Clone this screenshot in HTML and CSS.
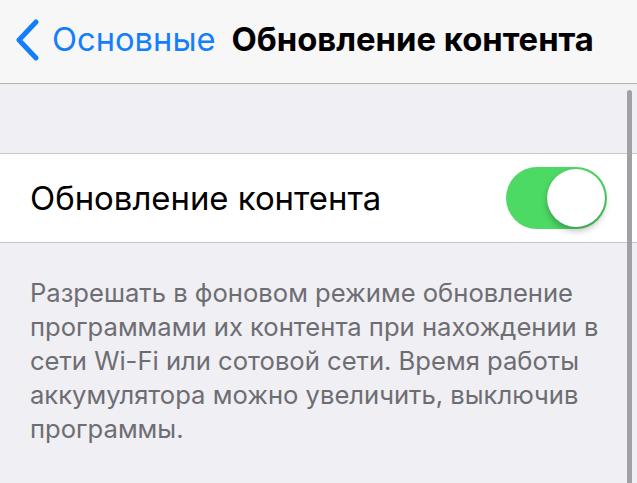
FILE: index.html
```html
<!DOCTYPE html>
<html lang="ru">
<head>
    <meta charset="UTF-8" />
    <title>Обновление контента</title>
    <link rel="stylesheet" href="styles.css">
</head>
<body>
    <div class="screen">
        <header class="navbar">
            <a class="back" href="#">
                <svg class="chevron" width="26" height="42" viewBox="0 0 26 42">
                    <path d="M22 3 L5 21 L22 39" fill="none" stroke="#157efb" stroke-width="5" stroke-linecap="round" stroke-linejoin="round"/>
                </svg>
                <span>Основные</span>
            </a>
            <h1 class="title">Обновление контента</h1>
        </header>

        <div class="spacer"></div>

        <div class="group">
            <div class="row">
                <span class="label">Обновление контента</span>
                <div class="switch on"><div class="knob"></div></div>
            </div>
        </div>

        <p class="footer">Разрешать в фоновом режиме обновление программами их контента при нахождении в сети Wi-Fi или сотовой сети. Время работы аккумулятора можно увеличить, выключив программы.</p>
    </div>
    <div class="scrollbar"></div>
</body>
</html>
```

FILE: styles.css
```css
body {
    margin: 0;
    background: #efeff4;
    font-family: Inter, 'Noto Sans', sans-serif;
    width: 637px;
    height: 483px;
    overflow: hidden;
    position: relative;
}

.navbar {
    height: 84px;
    background: #f7f7f7;
    border-bottom: 1px solid #b2b2b2;
    display: flex;
    align-items: center;
    padding: 0 0 5px 14px;
    box-sizing: border-box;
}

.back {
    display: flex;
    align-items: center;
    color: #157efb;
    text-decoration: none;
    font-size: 32.7px;
    gap: 12px;
}

.chevron {
    margin-top: 2px;
}

.title {
    margin: 0 0 0 16px;
    font-size: 32.8px;
    font-weight: 700;
    color: #000;
    white-space: nowrap;
}

.spacer {
    height: 69px;
}

.group {
    background: #fff;
    border-top: 1px solid #c8c7cc;
    border-bottom: 1px solid #c8c7cc;
}

.row {
    height: 88px;
    display: flex;
    align-items: center;
    justify-content: space-between;
    padding: 0 30px 0 30px;
}

.label {
    font-size: 32.9px;
    color: #000;
}

.switch {
    width: 101px;
    height: 62px;
    border-radius: 31px;
    background: #4cd964;
    display: flex;
    align-items: center;
    justify-content: flex-end;
    padding: 2px;
    box-sizing: border-box;
}

.knob {
    width: 58px;
    height: 58px;
    border-radius: 50%;
    background: #fff;
    box-shadow: 0 4px 6px rgba(0, 0, 0, 0.25), 0 0 1px rgba(0, 0, 0, 0.2);
}

.footer {
    margin: 0;
    padding: 33px 30px 0 30px;
    font-size: 25.6px;
    line-height: 34px;
    color: #6d6d72;
}

.scrollbar {
    position: absolute;
    right: 5px;
    top: 90px;
    bottom: 0;
    width: 5px;
    border-radius: 3px 3px 0 0;
    background: #a0a0a5;
}
```
